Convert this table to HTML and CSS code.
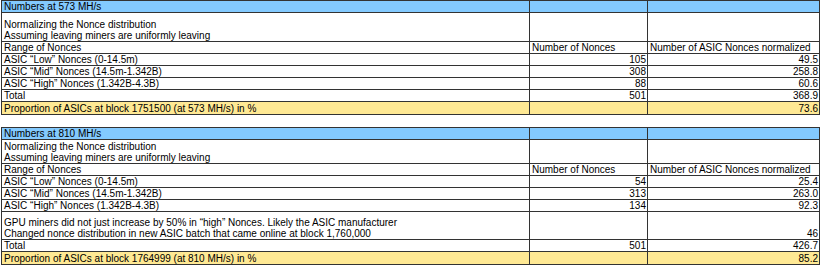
FILE: index.html
```html
<!DOCTYPE html>
<html>
<head>
<meta charset="utf-8">
<link rel="stylesheet" href="styles.css">
</head>
<body>
<table class="sheet">
  <colgroup><col class="c1"><col class="c2"><col class="c3"></colgroup>
  <tr class="head"><td>Numbers at 573 MH/s</td><td></td><td></td></tr>
  <tr class="note tall"><td>Normalizing the Nonce distribution<br>Assuming leaving miners are uniformly leaving</td><td></td><td></td></tr>
  <tr class="row"><td>Range of Nonces</td><td>Number of Nonces</td><td>Number of ASIC Nonces normalized</td></tr>
  <tr class="row"><td>ASIC “Low” Nonces (0-14.5m)</td><td class="num">105</td><td class="num">49.5</td></tr>
  <tr class="row"><td>ASIC “Mid” Nonces (14.5m-1.342B)</td><td class="num">308</td><td class="num">258.8</td></tr>
  <tr class="row"><td>ASIC “High” Nonces (1.342B-4.3B)</td><td class="num">88</td><td class="num">60.6</td></tr>
  <tr class="row"><td>Total</td><td class="num">501</td><td class="num">368.9</td></tr>
  <tr class="prop"><td>Proportion of ASICs at block 1751500 (at 573 MH/s) in %</td><td></td><td class="num">73.6</td></tr>
</table>
<table class="sheet second">
  <colgroup><col class="c1"><col class="c2"><col class="c3"></colgroup>
  <tr class="head"><td>Numbers at 810 MH/s</td><td></td><td></td></tr>
  <tr class="note short"><td>Normalizing the Nonce distribution<br>Assuming leaving miners are uniformly leaving</td><td></td><td></td></tr>
  <tr class="row"><td>Range of Nonces</td><td>Number of Nonces</td><td>Number of ASIC Nonces normalized</td></tr>
  <tr class="row"><td>ASIC “Low” Nonces (0-14.5m)</td><td class="num">54</td><td class="num">25.4</td></tr>
  <tr class="row"><td>ASIC “Mid” Nonces (14.5m-1.342B)</td><td class="num">313</td><td class="num">263.0</td></tr>
  <tr class="row"><td>ASIC “High” Nonces (1.342B-4.3B)</td><td class="num">134</td><td class="num">92.3</td></tr>
  <tr class="note gpu"><td>GPU miners did not just increase by 50% in “high” Nonces. Likely the ASIC manufacturer<br>Changed nonce distribution in new ASIC batch that came online at block 1,760,000</td><td></td><td class="num">46</td></tr>
  <tr class="row"><td>Total</td><td class="num">501</td><td class="num">426.7</td></tr>
  <tr class="prop"><td>Proportion of ASICs at block 1764999 (at 810 MH/s) in %</td><td></td><td class="num">85.2</td></tr>
</table>
</body>
</html>
```
FILE: styles.css
```css
html, body {
  margin: 0;
  padding: 0;
  background: #ffffff;
}
body {
  padding: 0 0 0 1px;
  font-family: "Liberation Sans", Arial, sans-serif;
  font-size: 10px;
  color: #000;
}
.sheet {
  border-collapse: collapse;
  table-layout: fixed;
  width: 818px;
}
.second {
  margin-top: 12px;
}
.c1 { width: 528px; }
.c2 { width: 118px; }
.c3 { width: 172px; }
.sheet td {
  border: 1px solid #333;
  padding: 0 1px 0 2px;
  line-height: 11px;
  vertical-align: bottom;
  white-space: nowrap;
  overflow: hidden;
}
.sheet td.num {
  text-align: right;
}
.row td { height: 11px; }
.head td {
  height: 11px;
  background: #83caff;
}
.prop td {
  height: 12px;
  background: #ffe994;
}
.tall td { height: 28px; }
.short td { height: 23px; }
.gpu td { height: 27px; }
```
